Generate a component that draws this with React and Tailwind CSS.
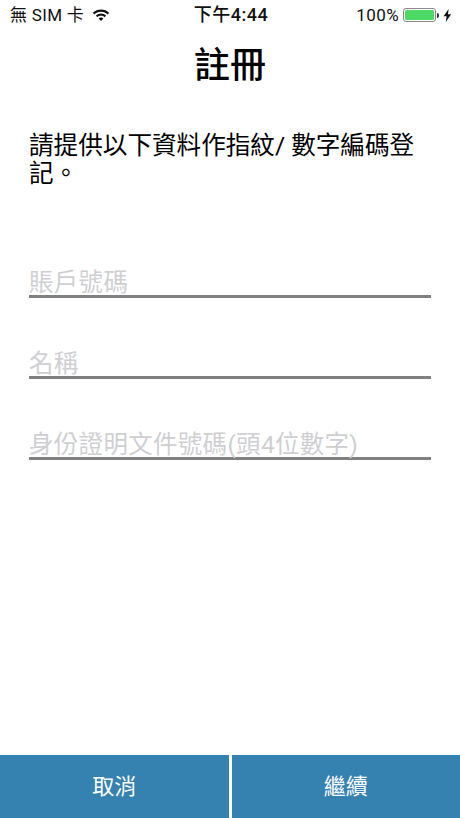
const cjk = "font-['Roboto','Noto_Sans_CJK_TC','Noto_Sans_CJK_JP',sans-serif]";

function Wifi() {
  return (
    <svg width="18" height="14" viewBox="0 0 18 14" fill="#111">
      <path d="M9 1.5C5.8 1.5 3 2.7.8 4.8l1.5 1.6C4.1 4.7 6.4 3.7 9 3.7s4.9 1 6.7 2.7l1.5-1.6C15 2.7 12.2 1.5 9 1.5z" />
      <path d="M9 5.6c-2 0-3.800.8-5.100 2l1.500 1.600c.9-.9 2.200-1.400 3.600-1.400s2.700.5 3.600 1.400l1.500-1.600c-1.300-1.200-3.100-2-5.100-2z" />
      <path d="M9 9.500c-1 0-1.800.4-2.400 1L9 13l2.400-2.500c-.6-.6-1.400-1-2.400-1z" />
    </svg>
  );
}

function Battery() {
  return (
    <div className="flex items-center">
      <div className="w-[33px] h-[14px] rounded-[3px] border border-[#8a8a8a] p-[1px]">
        <div className="w-full h-full rounded-[1.5px] bg-[#4cd964]" />
      </div>
      <div className="w-[2px] h-[5px] rounded-r-sm bg-[#333] ml-[1px]" />
    </div>
  );
}

function Bolt() {
  return (
    <svg width="9" height="13" viewBox="0 0 9 13" fill="#111">
      <path d="M5.600 0 .6 7.300h3L2.800 13l5.300-7.700H5z" />
    </svg>
  );
}

function Field({ label }) {
  return (
    <div className="border-b-[3px] border-[#808080] h-[40px] flex items-end">
      <span className="text-[24.5px] tracking-[0.3px] leading-[32px] text-[#cfcfd3] -mb-[4px] whitespace-nowrap">{label}</span>
    </div>
  );
}

export default function App() {
  return (
    <div className={`${cjk} w-[460px] h-[818px] bg-white flex flex-col text-black`}>
      <div className="h-[30px] pl-[10px] pr-[8px] flex items-center justify-between text-[17px] leading-[20px] text-[#111]">
        <div className="w-[150px] flex items-center gap-[8px]">
          <span className="tracking-[0.3px]">無 SIM 卡</span>
          <Wifi />
        </div>
        <span className="font-medium text-[18px] tracking-[0.5px]">下午4:44</span>
        <div className="w-[150px] flex items-center justify-end gap-[4px]">
          <span className="tracking-[0.4px]">100%</span>
          <Battery />
          <Bolt />
        </div>
      </div>
      <h1 className="h-[70px] pt-[2px] flex items-center justify-center text-[36px] font-medium leading-[44px]">註冊</h1>
      <p className="mt-[32px] pl-[29px] pr-[20px] text-[24.6px] leading-[28px] h-[64px]">請提供以下資料作指紋/ 數字編碼登記。</p>
      <div className="mt-[62px] pl-[29px] flex flex-col gap-[41px]">
        <div className="w-[402px]"><Field label="賬戶號碼" /></div>
        <div className="w-[402px]"><Field label="名稱" /></div>
        <div className="w-[402px]"><Field label="身份證明文件號碼(頭4位數字)" /></div>
      </div>
      <div className="mt-auto h-[63px] flex gap-[3px] text-white text-[22px]">
        <button className="flex-1 bg-[#3581b0]">取消</button>
        <button className="flex-1 bg-[#3581b0]">繼續</button>
      </div>
    </div>
  );
}
